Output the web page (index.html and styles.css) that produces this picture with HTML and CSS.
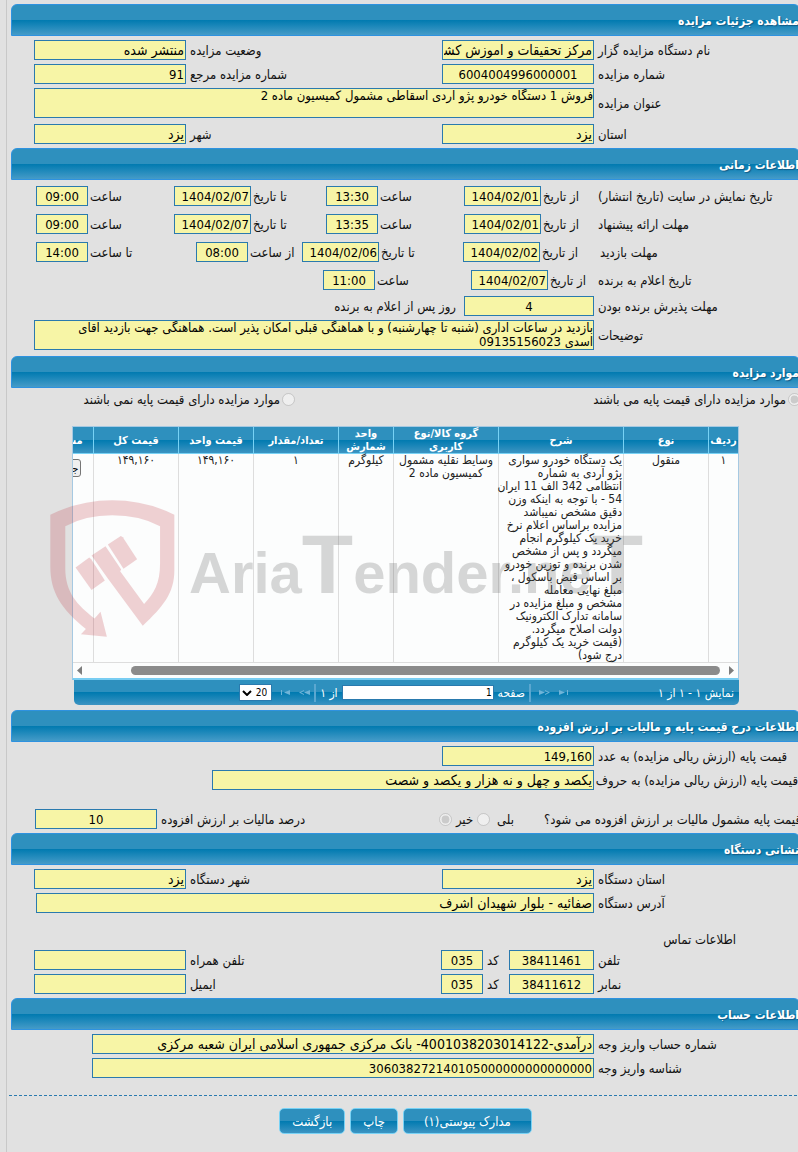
FILE: index.html
```html
<!DOCTYPE html>
<html lang="fa" dir="rtl">
<head>
  <meta charset="UTF-8" />
  <meta name="viewport" content="width=device-width, initial-scale=1.0"/>
  <title>مشاهده جزئیات مزایده</title>
  <link rel="stylesheet" href="styles.css">
</head>
<body>

<form class="page">

  <section>
    <h2 class="bar">مشاهده جزئیات مزایده</h2>
    <div class="body">
      <div class="row pair">
        <label for="org">نام دستگاه مزایده گزار</label>
        <input type="text" id="org" class="fa" value="مرکز تحقیقات و اموزش کشاورزی" readonly>
        <label for="status">وضعیت مزایده</label>
        <input type="text" id="status" class="fa" value="منتشر شده" readonly>
      </div>
      <div class="row pair">
        <label for="number">شماره مزایده</label>
        <input type="text" id="number" class="center" value="6004004996000001" readonly>
        <label for="ref">شماره مزایده مرجع</label>
        <input type="text" id="ref" value="91" readonly>
      </div>
      <div class="row wide tall">
        <label for="subject">عنوان مزایده</label>
        <textarea id="subject" readonly>فروش 1 دستگاه خودرو پژو آردی اسقاطی مشمول کمیسیون ماده 2</textarea>
      </div>
      <div class="row pair">
        <label for="province">استان</label>
        <input type="text" id="province" class="fa" value="یزد" readonly>
        <label for="city">شهر</label>
        <input type="text" id="city" class="fa" value="یزد" readonly>
      </div>
    </div>
  </section>

  <section>
    <h2 class="bar">اطلاعات زمانی</h2>
    <div class="body times">
      <div class="row time">
        <span class="title">تاریخ نمایش در سایت (تاریخ انتشار)</span>
        <div class="item"><label for="d1">از تاریخ</label><input type="text" id="d1" class="date" value="1404/02/01" readonly></div>
        <div class="item"><label for="h1">ساعت</label><input type="text" id="h1" class="hour" value="13:30" readonly></div>
        <div class="item"><label for="d2">تا تاریخ</label><input type="text" id="d2" class="date" value="1404/02/07" readonly></div>
        <div class="item"><label for="h2">ساعت</label><input type="text" id="h2" class="hour" value="09:00" readonly></div>
      </div>
      <div class="row time">
        <span class="title">مهلت ارائه پیشنهاد</span>
        <div class="item"><label for="d3">از تاریخ</label><input type="text" id="d3" class="date" value="1404/02/01" readonly></div>
        <div class="item"><label for="h3">ساعت</label><input type="text" id="h3" class="hour" value="13:35" readonly></div>
        <div class="item"><label for="d4">تا تاریخ</label><input type="text" id="d4" class="date" value="1404/02/07" readonly></div>
        <div class="item"><label for="h4">ساعت</label><input type="text" id="h4" class="hour" value="09:00" readonly></div>
      </div>
      <div class="row time visit">
        <span class="title">مهلت بازدید</span>
        <div class="item"><label for="d5">از تاریخ</label><input type="text" id="d5" class="date" value="1404/02/02" readonly></div>
        <div class="item"><label for="d6">تا تاریخ</label><input type="text" id="d6" class="date" value="1404/02/06" readonly></div>
        <div class="item"><label for="h5">از ساعت</label><input type="text" id="h5" class="hour" value="08:00" readonly></div>
        <div class="item"><label for="h6">تا ساعت</label><input type="text" id="h6" class="hour" value="14:00" readonly></div>
      </div>
      <div class="row time announce">
        <span class="title">تاریخ اعلام به برنده</span>
        <div class="item"><label for="d7">از تاریخ</label><input type="text" id="d7" class="date" value="1404/02/07" readonly></div>
        <div class="item"><label for="h7">ساعت</label><input type="text" id="h7" class="hour" value="11:00" readonly></div>
      </div>
      <div class="row accept">
        <label for="days">مهلت پذیرش برنده بودن</label>
        <input type="text" id="days" class="center" value="4" readonly>
        <span>روز پس از اعلام به برنده</span>
      </div>
      <div class="row wide tall">
        <label for="notes">توضیحات</label>
        <textarea id="notes" readonly>بازدید در ساعات اداری (شنبه تا چهارشنبه) و با هماهنگی قبلی امکان پذیر است. هماهنگی جهت بازدید آقای
اسدی 09135156023</textarea>
      </div>
    </div>
  </section>

  <section>
    <h2 class="bar">موارد مزایده</h2>
    <div class="options">
      <label><input type="radio" name="base" checked disabled>موارد مزایده دارای قیمت پایه می باشند</label>
      <label><input type="radio" name="base" disabled>موارد مزایده دارای قیمت پایه نمی باشند</label>
    </div>

    <div class="grid">
      <div class="grid-view">
        <table>
          <colgroup>
            <col class="w30"><col class="w85"><col class="w125"><col class="w105"><col class="w55"><col class="w85"><col class="w75"><col class="w85"><col class="w60">
          </colgroup>
          <thead>
            <tr>
              <th>ردیف</th>
              <th>نوع</th>
              <th>شرح</th>
              <th>گروه کالا/نوع کاربری</th>
              <th>واحد شمارش</th>
              <th>تعداد/مقدار</th>
              <th>قیمت واحد</th>
              <th>قیمت کل</th>
              <th>مشاهده</th>
            </tr>
          </thead>
          <tbody>
            <tr>
              <td>۱</td>
              <td>منقول</td>
              <td class="desc">یک دستگاه خودرو سواری<br>پژو آردی به شماره<br>انتظامی 342 الف 11 ایران<br>54 - با توجه به اینکه وزن<br>دقیق مشخص نمیباشد<br>مزایده براساس اعلام نرخ<br>خرید یک کیلوگرم انجام<br>میگردد و پس از مشخص<br>شدن برنده و توزین خودرو<br>بر اساس قبض باسکول ،<br>مبلغ نهایی معامله<br>مشخص و مبلغ مزایده در<br>سامانه تدارک الکترونیک<br>دولت اصلاح میگردد.<br>(قیمت خرید یک کیلوگرم<br>درج شود)</td>
              <td>وسایط نقلیه مشمول کمیسیون ماده 2</td>
              <td>کیلوگرم</td>
              <td>۱</td>
              <td>۱۴۹,۱۶۰</td>
              <td>۱۴۹,۱۶۰</td>
              <td><button type="button" class="details">جزئیات</button></td>
            </tr>
          </tbody>
        </table>
        <div class="scroll">
          <svg width="5" height="9" viewBox="0 0 5 9"><path d="M0 0L5 4.500L0 9Z" fill="#7d7d7d"/></svg>
          <div class="thumb"></div>
          <svg width="5" height="9" viewBox="0 0 5 9"><path d="M5 0L0 4.500L5 9Z" fill="#7d7d7d"/></svg>
        </div>
      </div>

      <div class="pager">
        <span class="count">نمایش ۱ - ۱ از ۱</span>
        <div class="pages">
          <svg class="nav" width="10" height="7" viewBox="0 0 10 7"><path d="M0 1L6 3.500L0 6Z"/><path d="M8 1h1v5h-1z"/></svg>
          <svg class="nav" width="12" height="7" viewBox="0 0 12 7"><path d="M0 1L6 3.500L0 6Z"/><path d="M6 1L11 3.500L6 6V5L9 3.500L6 2Z"/></svg>
          <i class="sep"></i>
          <label for="pageNo">صفحه</label>
          <input type="text" id="pageNo" value="1">
          <span>از ۱</span>
          <i class="sep"></i>
          <svg class="nav" width="12" height="7" viewBox="0 0 12 7"><path d="M12 1L6 3.500L12 6Z"/><path d="M6 1L1 3.500L6 6V5L3 3.500L6 2Z"/></svg>
          <svg class="nav" width="10" height="7" viewBox="0 0 10 7"><path d="M10 1L4 3.500L10 6Z"/><path d="M1 1h1v5h-1z"/></svg>
          <div class="size">
            <select aria-label="تعداد در صفحه"><option>20</option><option>50</option></select>
            <svg width="10" height="6" viewBox="0 0 10 6"><path d="M1 1L5 5L9 1" fill="none" stroke="#000" stroke-width="2"/></svg>
          </div>
        </div>
      </div>

      <div class="watermark" dir="ltr">
        <svg width="125" height="137" viewBox="30 254 374 412" fill="#bf3540">
          <path d="M30 298Q120 255 216 255Q315 255 403 298V465C403 535 368 575 308 632L203 490L154 421L196 393L243 463L240 468L312 567C342 535 360 505 360 445V333Q300 300 216 300Q135 300 75 333V460C75 530 110 570 163 610L181 590L200 665L122 658L137 642C62 582 30 530 30 455Z"/>
          <path d="M106 457L147 427L153 432L194 496L154 525Z"/>
          <path d="M203 388L242 362L248 366L291 432L250 461Z"/>
        </svg>
        <span>Aria<b>T</b>ender.ne<b>T</b></span>
      </div>
    </div>
  </section>

  <section>
    <h2 class="bar">اطلاعات درج قیمت پایه و مالیات بر ارزش افزوده</h2>
    <div class="body">
      <div class="row pair">
        <label for="price">قیمت پایه (ارزش ریالی مزایده) به عدد</label>
        <input type="text" id="price" value="149,160" readonly>
      </div>
      <div class="row words">
        <label for="words">قیمت پایه (ارزش ریالی مزایده) به حروف</label>
        <input type="text" id="words" class="fa" value="یکصد و چهل و نه هزار و یکصد و شصت" readonly>
      </div>
      <div class="row tax">
        <span class="question">قیمت پایه مشمول مالیات بر ارزش افزوده می شود؟</span>
        <label for="yes">بلی</label>
        <input type="radio" name="vat" id="yes" disabled>
        <label for="no">خیر</label>
        <input type="radio" name="vat" id="no" checked disabled>
        <label for="percent" class="push">درصد مالیات بر ارزش افزوده</label>
        <input type="text" id="percent" class="center percent" value="10" readonly>
      </div>
    </div>
  </section>

  <section>
    <h2 class="bar">نشانی دستگاه</h2>
    <div class="body">
      <div class="row pair">
        <label for="orgProvince">استان دستگاه</label>
        <input type="text" id="orgProvince" class="fa" value="یزد" readonly>
        <label for="orgCity">شهر دستگاه</label>
        <input type="text" id="orgCity" class="fa" value="یزد" readonly>
      </div>
      <div class="row wide address">
        <label for="address">آدرس دستگاه</label>
        <input type="text" id="address" class="fa" value="صفائیه - بلوار شهیدان اشرف" readonly>
      </div>
      <h3>اطلاعات تماس</h3>
      <div class="row phone">
        <label for="tel">تلفن</label>
        <input type="text" id="tel" class="center" value="38411461" readonly>
        <label for="telCode">کد</label>
        <input type="text" id="telCode" class="center" value="035" readonly>
        <label for="mobile">تلفن همراه</label>
        <input type="text" id="mobile" readonly>
      </div>
      <div class="row phone">
        <label for="fax">نمابر</label>
        <input type="text" id="fax" class="center" value="38411612" readonly>
        <label for="faxCode">کد</label>
        <input type="text" id="faxCode" class="center" value="035" readonly>
        <label for="email">ایمیل</label>
        <input type="text" id="email" readonly>
      </div>
    </div>
  </section>

  <section>
    <h2 class="bar">اطلاعات حساب</h2>
    <div class="body">
      <div class="row account">
        <label for="account">شماره حساب واریز وجه</label>
        <input type="text" id="account" class="fa" value="درآمدی-4001038203014122- بانک مرکزی جمهوری اسلامی ایران شعبه مرکزی" readonly>
      </div>
      <div class="row account">
        <label for="deposit">شناسه واریز وجه</label>
        <input type="text" id="deposit" value="306038272140105000000000000000" readonly>
      </div>
    </div>
  </section>

  <div class="actions">
    <button type="button" class="attach">مدارک پیوستی(۱)</button>
    <button type="button">چاپ</button>
    <button type="button">بازگشت</button>
  </div>

</form>

</body>
</html>
```
FILE: styles.css
```css
* {
  box-sizing: border-box;
}

body {
  margin: 0;
  background: #e1e1e1;
  color: #111;
  font-family: Tahoma, "DejaVu Sans Condensed", "DejaVu Sans", sans-serif;
  font-size: 13px;
}

.page {
  min-height: 100vh;
  margin-right: 0;
  margin-left: 6px;
  padding-top: 4px;
  border-left: 1px solid #c8c8c8;
  overflow: hidden;
}

.bar {
  height: 32px;
  margin: 0 -2px 0 4px;
  border: 1px solid #2e92e0;
  border-radius: 6px 6px 0 0;
  background: linear-gradient(#2e90be 50%, #007ab0 50%, #459bc8);
  color: #fff;
  font-size: 12px;
  line-height: 32px;
  text-shadow: 1px 1px 1px #125a85;
  white-space: nowrap;
}

.body {
  padding-top: 4px;
}

.times {
  padding-top: 6px;
}

.row {
  display: grid;
  gap: 4px;
  align-items: center;
  margin-bottom: 4px;
  padding-left: 27px;
  white-space: nowrap;
}

.row label,
.row .title {
  text-align: left;
}

.pair {
  grid-template-columns: 200px 152px 1fr 152px;
}

.wide {
  grid-template-columns: 200px 1fr;
}

.tall {
  margin-bottom: 6px;
}

input[type="text"],
textarea {
  display: block;
  width: 100%;
  min-width: 0;
  height: 20px;
  margin: 0;
  padding: 0 1px;
  border: 1px solid #2a7aae;
  border-radius: 0;
  background: #f7f5a6;
  color: #000;
  font-family: inherit;
  font-size: 13px;
  outline: none;
}

textarea {
  height: 30px;
  padding: 0;
  line-height: 14px;
  resize: none;
  overflow: hidden;
}

input[type="text"].fa {
  font-size: 14px;
}

input.center,
input.hour {
  text-align: center;
}

input[type="radio"] {
  width: 13px;
  height: 13px;
  margin: 0;
}

/* dates and hours */
.time {
  grid-template-columns: 200px 130px 134px 148px 1fr;
  margin-bottom: 8px;
  padding-left: 29px;
}

.visit {
  grid-template-columns: 198px 133px 157px 102px 1fr;
}

.announce {
  grid-template-columns: 200px 123px 144px;
  margin-bottom: 6px;
}

.item {
  display: flex;
  align-items: center;
  justify-content: flex-end;
  gap: 2px;
}

.item .date {
  width: 77px;
}

.item .hour {
  width: 52px;
}

.accept {
  grid-template-columns: 200px 130px 1fr;
}

.accept span {
  padding-right: 4px;
}

/* items grid */
.options {
  display: grid;
  grid-template-columns: 506px 1fr;
  height: 22px;
  margin-right: -3px;
  align-items: center;
  white-space: nowrap;
}

.options label {
  display: flex;
  align-items: center;
  gap: 2px;
}

.grid {
  position: relative;
  margin: 16px 59px 5px 65px;
}

.grid-view {
  border: 1px solid #a6c9e2;
  border-bottom: 2px solid #78cdf2;
  background: #fcfdfd;
  overflow: hidden;
}

table {
  width: 705px;
  table-layout: fixed;
  border-collapse: separate;
  border-spacing: 0;
}

.w30 { width: 30px; }
.w55 { width: 55px; }
.w60 { width: 60px; }
.w75 { width: 75px; }
.w85 { width: 85px; }
.w105 { width: 105px; }
.w125 { width: 125px; }

th {
  height: 27px;
  padding: 0 1px;
  border-left: 1px solid #78d2f5;
  border-bottom: 1px solid #78d2f5;
  background: linear-gradient(#2e90be 50%, #007ab0 50%, #3c94c2);
  color: #fff;
  font-size: 11px;
  line-height: 13px;
}

td {
  height: 208px;
  padding: 0 1px;
  border-left: 1px solid #ddd;
  border-bottom: 1px solid #ddd;
  color: #222;
  font-size: 12px;
  line-height: 13px;
  text-align: center;
  vertical-align: top;
}

td.desc {
  text-align: right;
  white-space: nowrap;
}

.details {
  height: 18px;
  margin-top: 5px;
  padding: 0 2px;
  border: 1px solid #767676;
  border-radius: 3px;
  background: #efefef;
  font-family: inherit;
  font-size: 11px;
}

.scroll {
  display: flex;
  align-items: center;
  height: 15px;
  padding: 0 4px;
}

.thumb {
  flex: 1;
  height: 9px;
  margin: 0 9px 0 49px;
  border-radius: 5px;
  background: #8b8b8b;
}

.pager {
  display: flex;
  align-items: center;
  height: 25px;
  margin-left: 2px;
  padding: 0 5px;
  border-radius: 0 0 5px 5px;
  background: linear-gradient(#2e90be 50%, #007ab0 50%, #3c94c2);
  color: #fff;
  font-size: 12px;
}

.count {
  width: 165px;
}

.pages {
  display: flex;
  align-items: center;
  gap: 4px;
}

.nav {
  margin-left: 4px;
  fill: #6fb4d8;
}

.sep {
  width: 2px;
  height: 18px;
  background: #5ba7d0;
}

.pages input[type="text"] {
  width: 152px;
  height: 15px;
  background: #fff;
  font-size: 10px;
}

.size {
  position: relative;
}

.size select {
  display: block;
  width: 33px;
  height: 17px;
  padding: 0 4px;
  border: 1px solid #2a7aae;
  background: #fff;
  color: #000;
  font-family: inherit;
  font-size: 10px;
  appearance: none;
}

.size svg {
  position: absolute;
  top: 6px;
  left: 3px;
  pointer-events: none;
}

.watermark {
  position: absolute;
  top: 74px;
  left: -22px;
  display: flex;
  align-items: center;
  gap: 14px;
  opacity: 0.22;
  pointer-events: none;
}

.watermark span {
  color: #505050;
  font-family: "Liberation Sans", sans-serif;
  font-size: 58px;
  font-weight: bold;
  line-height: 76px;
}

.watermark b {
  font-size: 84px;
}

/* base price */
.words {
  grid-template-columns: 200px 1fr;
  margin-bottom: 19px;
  padding-left: 205px;
}

.tax {
  display: flex;
  margin-right: -3px;
  padding-left: 28px;
}

.tax .question {
  width: 283px;
}

.tax #yes {
  margin-right: 3px;
}

.tax .push {
  margin-right: auto;
}

.tax .percent {
  width: 122px;
}

/* contact */
h3 {
  height: 20px;
  margin: 17px 62px 0 0;
  font-size: 13px;
  font-weight: normal;
  line-height: 20px;
}

.address {
  padding-left: 29px;
}

.phone {
  grid-template-columns: 200px 85px 18px 42px 1fr 152px;
}

.account {
  grid-template-columns: 200px 1fr;
  padding-left: 85px;
}

.actions {
  display: flex;
  justify-content: center;
  gap: 5px;
  margin: 17px -4px 0 2px;
  padding-top: 12px;
  border-top: 1px dashed #2a7aae;
}

.actions button {
  height: 26px;
  padding: 0 12px;
  border: 1px solid #78d2f5;
  border-radius: 5px;
  background: linear-gradient(#2e90be 50%, #007ab0 50%, #3c94c2);
  color: #fff;
  font-family: inherit;
  font-size: 13px;
}

.actions .attach {
  padding: 0 20px;
}
```
